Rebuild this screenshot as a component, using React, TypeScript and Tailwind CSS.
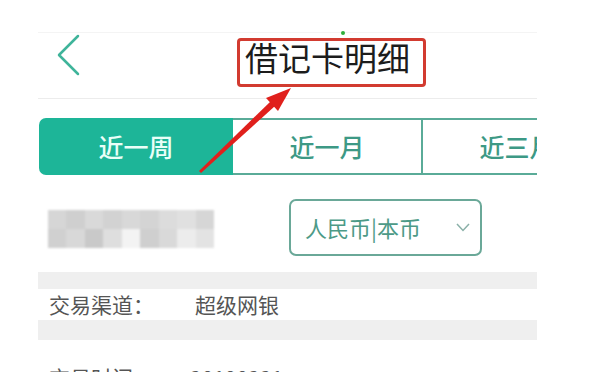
import React from 'react';

const tiles = [
    ['#d6d6d6', '#cfcfcf', '#d9d9d9', '#d2d2d2', '#d8d8d8', '#d4d4d4', '#dcdcdc', '#e0e0e0', '#d6d6d6'],
    ['#d0d0d0', '#d8d8d8', '#c9c9c9', '#dedede', '#f3f3f3', '#cfcfcf', '#d9d9d9', '#ececec', '#e3e3e3'],
];

function BlurredName() {
    // 打码的账户名
    return (
        <div className="flex flex-col w-[166px] h-[38px] blur-[1px]">
            {tiles.map((row, i) => (
                <div key={i} className="flex flex-1">
                    {row.map((c, j) => (
                        <div key={j} className="flex-1" style={{ backgroundColor: c }} />
                    ))}
                </div>
            ))}
        </div>
    );
}

function Tab({ label, active }: { label: string; active?: boolean }) {
    if (active) {
        return (
            <div className="w-[194px] shrink-0 flex items-center justify-center bg-[#1db598] rounded-l-[7px] text-[25px] font-medium text-[#eafff8]">
                {label}
            </div>
        );
    }
    return (
        <div className="w-[190px] shrink-0 flex items-center justify-center border-y-2 border-r-2 border-[#5aab98] text-[25px] font-medium text-[#3d9985]">
            {label}
        </div>
    );
}

export default function App() {
    return (
        <div className="relative w-[608px] h-[372px] overflow-hidden bg-white font-['Noto_Sans_CJK_SC',sans-serif]">
            <div className="pt-[32px] pl-[38px]">
                <div className="w-[499px] h-[340px] overflow-hidden bg-white border-t border-[#f4f4f4]">
                    {/* 导航栏 */}
                    <div className="flex items-start h-[66px] border-b border-[#ececec]">
                        <svg className="ml-[18px] mt-[1px] shrink-0" width="24" height="42" viewBox="0 0 24 42" fill="none">
                            <polyline points="22,2 3,21 22,40" stroke="#3fb49a" strokeWidth="2.5" strokeLinejoin="round" strokeLinecap="round" />
                        </svg>
                        <div className="ml-[157px] mt-[5px] border-[3px] border-[#d23b30] rounded-[4px] pl-[5px] pr-[13px] pb-[10px] text-[33px] leading-[33px] text-[#1c1c1c] whitespace-nowrap">
                            借记卡明细
                        </div>
                    </div>

                    {/* 时间筛选 */}
                    <div className="flex h-[57px] mt-[19px] ml-[1px]">
                        <Tab label="近一周" active />
                        <Tab label="近一月" />
                        <Tab label="近三月" />
                    </div>

                    {/* 币种 */}
                    <div className="flex items-center h-[57px] mt-[24px]">
                        <div className="ml-[10px] mt-[3px]">
                            <BlurredName />
                        </div>
                        <div className="ml-[75px] w-[193px] h-[57px] border-2 border-[#6aa898] rounded-[7px] flex items-center pl-[14px] pr-[6px]">
                            <span className="text-[22px] text-[#4d9a87] whitespace-nowrap">人民币|本币</span>
                            <svg className="ml-auto mr-[4px]" width="14" height="9" viewBox="0 0 14 9" fill="none">
                                <polyline points="1,1 7,7.5 13,1" stroke="#8ab0a8" strokeWidth="1.5" />
                            </svg>
                        </div>
                    </div>

                    <div className="h-[17px] mt-[16px] bg-[#efefef]" />
                    <div className="flex items-center h-[31px] pl-[11px] text-[21px] text-[#555555]">
                        <span className="w-[146px]">交易渠道：</span>
                        <span>超级网银</span>
                    </div>
                    <div className="h-[20px] bg-[#efefef]" />
                    <div className="flex items-center h-[31px] mt-[22px] pl-[11px] text-[21px] text-[#555555]">
                        <span className="w-[141px]">交易时间：</span>
                        <span>20190221</span>
                    </div>
                </div>
            </div>

            {/* 状态栏残点 */}
            <div className="absolute left-[341px] top-[31px] w-[4px] h-[4px] rounded-full bg-[#2fae3a]" />

            {/* 红色箭头标注 */}
            <svg className="absolute left-0 top-0 pointer-events-none" width="608" height="372" viewBox="0 0 608 372">
                <polygon points="199,171 201,173 275,106 271,101" fill="#e0201c" />
                <polygon points="291,88 266,98 278,111" fill="#e0201c" />
            </svg>
        </div>
    );
}
